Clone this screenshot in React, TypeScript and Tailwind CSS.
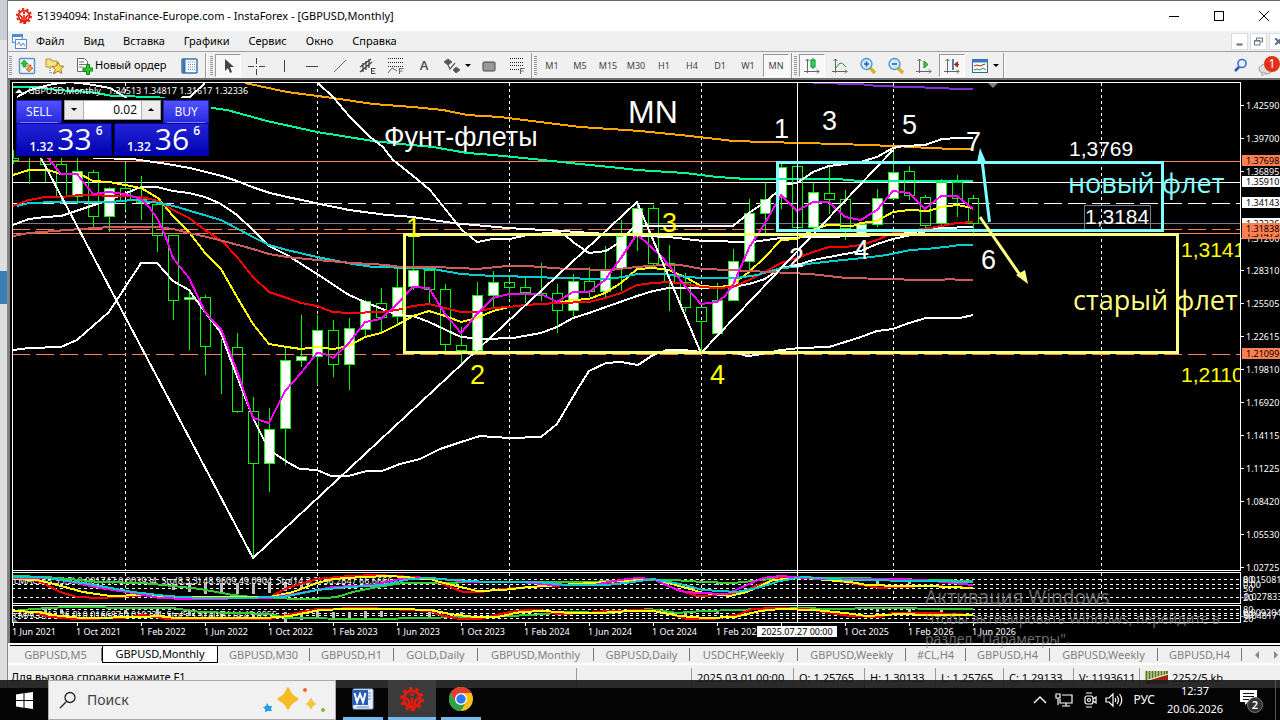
import React from "react";

type Candle = [x: number, high: number, low: number, top: number, bottom: number, up: 0 | 1];

const candles: Candle[] = [
  [13, 150, 164, 158, 160, 0], [29, 150, 184, 150, 156, 0], [45, 150, 182, 155, 164, 0],
  [61, 158, 204, 164, 196, 0], [77, 158, 204, 171, 196, 1], [93, 170, 227, 172, 216, 0],
  [109, 187, 232, 188, 216, 1], [125, 163, 210, 188, 200, 0], [141, 176, 220, 199, 202, 0],
  [157, 203, 252, 204, 235, 0], [173, 235, 320, 235, 300, 0], [189, 290, 350, 297, 299, 1],
  [205, 295, 375, 297, 346, 0], [221, 339, 394, 346, 346, 0], [237, 333, 413, 347, 411, 0],
  [253, 397, 557, 411, 463, 0], [269, 408, 492, 429, 463, 1], [285, 348, 465, 360, 428, 1],
  [301, 315, 367, 356, 360, 1], [317, 315, 385, 330, 356, 1], [333, 320, 377, 330, 364, 0],
  [349, 318, 390, 328, 364, 1], [365, 300, 337, 301, 329, 1], [381, 288, 333, 303, 317, 0],
  [397, 268, 325, 287, 316, 1], [413, 218, 290, 270, 286, 1], [429, 270, 305, 270, 289, 0],
  [445, 284, 353, 289, 344, 0], [461, 327, 363, 345, 350, 0], [477, 282, 355, 295, 350, 1],
  [493, 271, 307, 282, 295, 1], [509, 278, 298, 282, 287, 0], [525, 278, 303, 287, 292, 0],
  [541, 263, 301, 293, 295, 0], [557, 284, 333, 293, 310, 0], [573, 274, 316, 281, 310, 1],
  [589, 267, 297, 281, 291, 0], [605, 246, 297, 269, 291, 1], [621, 220, 291, 236, 268, 1],
  [637, 204, 251, 208, 235, 1], [653, 205, 268, 208, 263, 0], [669, 245, 311, 263, 282, 0],
  [685, 273, 312, 282, 307, 0], [701, 307, 351, 307, 321, 0], [717, 283, 337, 300, 333, 1],
  [733, 249, 300, 261, 300, 1], [749, 199, 270, 213, 261, 1], [765, 183, 233, 199, 213, 1],
  [781, 162, 209, 167, 197, 1], [797, 166, 227, 166, 227, 0], [813, 183, 232, 192, 227, 1],
  [829, 167, 214, 193, 199, 0], [845, 190, 240, 199, 228, 0], [861, 222, 233, 224, 233, 1],
  [877, 189, 227, 198, 224, 1], [893, 152, 198, 172, 198, 1], [909, 166, 200, 171, 195, 0],
  [925, 195, 228, 197, 225, 0], [941, 179, 226, 182, 223, 1], [957, 175, 217, 182, 198, 0],
  [973, 195, 233, 198, 223, 0],
];

const curves: { color: string; points: string }[] = [
  { color: "#8a2be2", points: "813,83 860,84 877,86 908,87 941,88 957,89 973,89" },
  { color: "#ffa500", points: "245,83 287,92 333,98 373,104 413,107 443,110 467,115 500,117 540,122 580,127 640,131 680,135 717,139 733,141 767,142 800,143 840,144 893,146 915,147 927,148 957,149 973,149" },
  { color: "#00fa9a", points: "13,87 37,87 57,90 90,92 113,96 157,97 190,103 212,108 227,110 267,121 317,132 373,141 400,144 433,147 467,153 493,155 533,159 580,164 620,168 637,170 669,172 685,173 717,177 747,179 767,179 837,179 860,181 973,181" },
  { color: "#ffffff", points: "17,97 30,90 53,84 70,82 87,84 110,88 125,97 140,110 165,112 183,97 190,97 205,83" },
  { color: "#ffffff", points: "318,83 333,97 350,117 370,137 383,147 393,160 412,175 430,190 446,210 462,230 477,242 493,239 510,239 527,235 557,232 565,235 573,242 589,253 606,251 617,244 633,228 642,226 733,226 749,213 765,202 777,192 781,185 797,183 813,172 829,166 860,162 877,157 893,148 903,146 925,145 942,139 958,138 973,138" },
  { color: "#ffffff", points: "93,158 133,159 167,164 190,168 222,176 237,181 252,187 270,193 287,197 302,200 320,204 349,210 387,215 413,217 453,223 507,228 563,231 620,235 669,237 703,241 753,242 780,238 820,237 861,236 900,234 941,228 973,227" },
  { color: "#ffffff", points: "13,225 29,219 45,217 61,216 70,213 109,200 141,187 157,187 173,191 189,193 205,197 221,204 237,215 253,230 269,246 287,255 317,274 349,295 365,302 397,315 413,316 429,322 461,337 483,339 513,338 541,333 557,327 573,318 589,313 620,302 637,296 653,291 669,288 717,288 733,287 749,284 765,279 781,268 797,265 813,260 829,257 861,251 877,244 893,239 925,232" },
  { color: "#ffffff", points: "13,350 29,348 61,347 77,340 109,312 141,263 157,263 173,281 189,290 205,312 221,333 230,358 253,418 264,440 274,453 287,462 300,469 317,470 331,476 348,476 367,471 382,471 400,464 420,459 440,449 461,442 480,436 509,438 541,437 557,424 577,390 589,371 606,363 621,362 638,365 653,355 667,350 683,350 701,352 733,352 747,356 757,355 781,350 800,348 829,347 845,342 861,337 877,331 893,329 909,323 926,318 960,318 973,315" },
  { color: "#ffff00", points: "13,175 29,170 48,170 61,174 80,174 93,181 109,182 125,185 141,188 158,198 173,216 189,232 205,253 221,269 237,297 253,324 269,344 287,347 301,349 317,347 333,349 349,346 365,337 381,333 397,325 413,316 429,311 445,316 461,322 477,318 493,311 509,307 525,305 557,303 573,300 589,299 605,293 621,283 637,269 653,268 669,270 687,278 701,286 717,287 730,286 749,272 765,257 781,240 797,239 813,230 827,225 853,226 861,223 877,221 893,212 909,210 928,211 941,207 957,205 973,208" },
  { color: "#ff0000", points: "13,206 29,200 45,197 61,197 80,195 123,196 141,197 158,201 173,210 189,218 205,230 223,242 237,257 253,277 269,292 287,298 301,303 317,306 333,312 349,313 381,312 397,310 413,306 429,304 445,308 461,312 477,312 493,308 509,307 525,305 557,303 589,302 605,298 621,293 637,285 653,283 669,282 687,284 701,287 717,288 733,287 749,280 765,272 781,263 797,258 813,252 829,247 845,247 861,245 877,240 893,233 930,228 941,226 957,223 973,222" },
  { color: "#00ced1", points: "17,206 29,203 57,202 110,202 133,200 160,203 177,207 221,220 253,237 269,245 287,250 317,257 337,261 353,264 373,267 413,268 433,269 461,274 493,276 541,277 553,278 607,279 623,277 637,274 663,274 687,277 703,278 737,278 757,275 781,268 797,267 807,264 833,261 863,258 887,255 910,250 927,249 945,247 960,245 973,245" },
  { color: "#cd5c5c", points: "13,236 29,233 67,230 110,227 158,227 173,229 189,233 207,237 227,242 253,249 269,254 287,257 317,260 353,263 387,265 400,267 430,267 461,268 477,269 507,266 527,266 567,269 610,270 637,267 663,265 680,265 703,269 730,270 770,272 810,274 847,278 887,279 920,280 940,280 950,279 960,280 973,280" },
  { color: "#ff00ff", points: "48,158 61,174 77,174 93,194 109,192 125,194 141,199 149,207 157,218 165,235 173,258 189,278 205,312 213,321 221,329 237,371 253,418 269,423 285,391 301,373 317,353 325,354 333,358 349,343 365,322 381,319 397,304 413,287 429,288 445,314 461,333 477,314 493,298 509,294 541,294 557,302 573,292 589,292 605,280 621,258 637,234 663,258 685,286 701,304 717,302 725,296 733,285 749,248 765,223 781,195 797,211 813,202 829,202 845,217 861,220 877,210 893,191 909,193 925,209 941,196 957,196 973,209" },
  { color: "#ffffff", points: "41,158 253,558 477,350 637,202 701,353 893,150" },
];

const oscillators: { color: string; points: string }[] = [
  { color: "#32cd32", points: "13,576 47,577 100,582 143,583 173,586 200,589 233,595 260,598 313,599 337,597 353,592 377,587 403,583 430,583 487,582 587,582 637,580 673,580 703,582 733,583 753,581 780,578 850,578 973,581" },
  { color: "#ff0000", points: "13,578 30,579 43,583 60,592 77,597 100,598 150,595 180,598 270,597 287,588 317,579 350,576 377,575 430,578 440,583 463,592 480,592 503,589 530,587 570,585 593,584 653,579 673,588 697,596 720,595 740,593 753,587 780,578 810,577 850,583 880,588 897,587 933,586 973,588" },
  { color: "#ffff00", points: "13,579 37,580 50,583 83,592 110,596 143,595 167,597 270,597 293,592 317,583 333,579 363,577 390,576 430,579 440,582 477,591 503,590 530,587 560,585 607,582 653,579 687,588 703,593 730,596 747,592 773,580 803,578 850,582 867,585 900,586 927,586 973,588" },
  { color: "#ff00ff", points: "13,578 50,578 67,581 100,588 133,593 160,598 187,599 270,598 300,593 333,587 373,585 400,579 430,578 470,582 520,582 553,585 593,585 620,580 637,578 653,579 680,591 697,593 727,594 747,585 763,578 780,576 820,579 893,579 923,580 943,582 973,585" },
  { color: "#00ced1", points: "13,577 40,577 83,583 133,592 167,596 200,598 233,598 283,597 317,590 350,587 383,585 410,579 430,578 453,580 487,582 537,582 567,585 607,585 633,582 653,579 680,584 703,590 737,592 757,588 780,581 803,577 850,580 927,581 973,582" },
  { color: "#32cd32", points: "13,611 33,609 67,607 143,608 173,608 200,612 270,614 287,618 367,619 430,618 453,617 487,617 530,615 570,612 607,613 650,609 677,613 703,611 737,610 780,608 850,609 860,608 973,609" },
  { color: "#ff0000", points: "13,611 33,612 50,617 77,619 123,618 143,615 167,619 270,619 287,615 317,609 367,608 430,611 440,615 460,619 480,619 500,614 523,610 540,610 557,614 587,613 607,611 650,610 673,615 687,619 713,619 737,615 753,609 773,608 807,609 830,613 850,616 880,617 893,613 933,613 973,615" },
  { color: "#ffff00", points: "13,611 37,612 60,616 83,618 143,617 158,616 175,618 265,618 290,616 320,610 347,609 400,609 430,610 450,614 475,617 498,617 520,612 545,611 570,613 600,613 630,611 653,611 680,616 705,618 735,617 760,611 780,609 815,610 845,613 867,616 900,614 930,615 973,615" },
];

const histogram: [number, number, number][] = [
  [173, 584, 590], [189, 583, 592], [205, 583, 594], [221, 583, 594], [237, 583, 594], [253, 583, 594],
  [269, 583, 593], [285, 582, 591], [301, 582, 588], [669, 580, 582], [701, 580, 583], [717, 582, 585],
  [781, 576, 580], [813, 577, 580], [877, 580, 584], [909, 580, 584], [45, 609, 613], [61, 609, 614],
  [125, 610, 614], [157, 610, 617], [189, 610, 616], [221, 611, 618], [253, 612, 620], [285, 612, 622],
  [301, 612, 620], [317, 611, 619], [333, 612, 619], [349, 612, 618], [365, 611, 618], [381, 611, 617],
  [429, 612, 617], [461, 612, 617], [509, 611, 615], [685, 611, 615], [717, 611, 614], [877, 609, 612],
  [909, 609, 613], [941, 609, 612],
];

const prices: [string, number][] = [
  ["1.42590", 105], ["1.39700", 138], ["1.36895", 171], ["1.31200", 238], ["1.28310", 270], ["1.25505", 303],
  ["1.22615", 336], ["1.19810", 369], ["1.16920", 402], ["1.14115", 435], ["1.11225", 468], ["1.08420", 501],
  ["1.05530", 534], ["1.02725", 567],
];

const priceTags: [string, number, string][] = [
  ["1.37698", 160, "#ff7f50"], ["1.35910", 181, "#ffffff"], ["1.34143", 202, "#ffffff"],
  ["1.32336", 223, "#ffffff"], ["1.31473", 233, "#ff7f50"], ["1.31838", 228, "#ff7f50"],
  ["1.21099", 353, "#ff7f50"],
];

const dates = [
  "1 Jun 2021", "1 Oct 2021", "1 Feb 2022", "1 Jun 2022", "1 Oct 2022", "1 Feb 2023", "1 Jun 2023", "1 Oct 2023",
  "1 Feb 2024", "1 Jun 2024", "1 Oct 2024", "1 Feb 2025", "", "1 Oct 2025", "1 Feb 2026", "1 Jun 2026",
];

const notes: [string, number, number, string, string][] = [
  ["MN", 628, 123, "#fff", "text-[32px]"],
  ["Фунт-флеты", 384, 146, "#fff", "text-[27px]"],
  ["1", 774, 138, "#fff", "text-[27px]"],
  ["3", 822, 130, "#fff", "text-[27px]"],
  ["5", 902, 134, "#fff", "text-[27px]"],
  ["7", 966, 151, "#fff", "text-[27px]"],
  ["2", 789, 267, "#fff", "text-[27px]"],
  ["4", 854, 259, "#fff", "text-[27px]"],
  ["6", 981, 269, "#fff", "text-[27px]"],
  ["1", 406, 237, "#ff0", "text-[27px]"],
  ["3", 662, 232, "#ff0", "text-[27px]"],
  ["2", 470, 384, "#ff0", "text-[27px]"],
  ["4", 710, 384, "#ff0", "text-[27px]"],
  ["1,3769", 1069, 156, "#fff", "text-[21px]"],
  ["1,3184", 1085, 224, "#fff", "text-[21px]"],
  ["1,3141", 1181, 257, "#ff0", "text-[21px]"],
  ["1,2110", 1181, 382, "#ff0", "text-[21px]"],
];

function Chart() {
  return (
    <svg viewBox="10 80 1270 563" preserveAspectRatio="xMinYMin meet" className="block h-full w-full" role="img" aria-label="GBPUSD, Monthly">
      <defs>
        <clipPath id="plot"><rect x="12" y="83" width="1228" height="560" /></clipPath>
      </defs>
      <rect x="10" y="80" width="1270" height="563" fill="#000" />
      <g shapeRendering="crispEdges" fill="none" clipPath="url(#plot)">
        {[125, 317, 509, 701, 893, 1101].map((x) => (
          <path key={x} d={`M${x + 0.5} 83V570M${x + 0.5} 573V603`} stroke="#fff" strokeDasharray="3 3" />
        ))}
        <path d="M12 161.5H1240M12 233.5H1240" stroke="#ff7f50" />
        <path d="M12 182.5H1240" stroke="#fff" />
        <path d="M12 203.5H1240" stroke="#fff" strokeDasharray="18 6" />
        <path d="M12 223.5H1240" stroke="#708090" />
        <path d="M12 229.5H1240M12 354.5H1240" stroke="#ff7f50" strokeDasharray="18 6" />
        {candles.map(([x, h, l, t, b, up]) => (
          <g key={x}>
            <path d={`M${x + 0.5} ${h}V${t}M${x + 0.5} ${b}V${l}`} stroke="#0f0" />
            <rect x={x - 4.5} y={t + 0.5} width="10" height={b - t} fill={up ? "#fff" : "none"} stroke="#0f0" />
          </g>
        ))}
        {curves.map((c, i) => (
          <polyline key={i} points={c.points} stroke={c.color} strokeWidth="2" />
        ))}
        <path d="M797.5 83V622" stroke="#fff" />
        <rect x="404.5" y="234.5" width="773" height="118" stroke="#ffff80" strokeWidth="3" />
        <rect x="777.5" y="162.5" width="385" height="68" stroke="#80ffff" strokeWidth="3" />
        <path d="M1084.5 229V205.5H1150.5V229" stroke="#708090" />
        <path
          d="M12 579.5H1240M12 584.5H1240M12 588.5H1240M12 597.5H1240M12 609.5H1240M12 613.5H1240M12 615.5H1240M12 618.5H1240"
          stroke="#fff"
          strokeDasharray="3 3"
        />
        {histogram.map(([x, t, b]) => (
          <path key={`${x}-${t}`} d={`M${x + 0.5} ${t}V${b}`} stroke="#c0c0c0" strokeWidth="3" />
        ))}
        <g className="fill-white font-['Noto_Sans',sans-serif] text-[9px]">
          <text x="14" y="584" xmlSpace="preserve">cMACD(5,35,5) 0.001747 0.003934  Sto(8,3,3) 48.9609 49.0904  Sto(14,3,3) 56.2847 66.6666</text>
          <text x="14" y="618" xmlSpace="preserve">cMACD(12,26,9) 0.016687 0.019234  Sto(5,3,3) 40.6114 43.0955</text>
        </g>
        {oscillators.map((c, i) => (
          <polyline key={i} points={c.points} stroke={c.color} strokeWidth="2" />
        ))}
      </g>
      <g stroke="none">
        <path d="M980 148L986 162H977z" fill="#80ffff" />
        <path d="M989.5 222L982 160" stroke="#80ffff" strokeWidth="3" />
        <path d="M1028 284L1016 275L1025 270z" fill="#ffff80" />
        <path d="M980 217L1020 275" stroke="#ffff80" strokeWidth="3" />
        <path d="M988 83h10l-5 5z" fill="#708090" />
        <path d="M15 93l4-4l4 4z" fill="#fff" />
        <path d="M13 617l5 5h-5z" fill="#708090" />
      </g>
      <g clipPath="url(#plot)">
        {notes.map(([t, x, y, fill, size], i) => (
          <text key={i} x={x} y={y} fill={fill} className={`font-['Liberation_Sans',sans-serif] ${size}`}>{t}</text>
        ))}
        <text x="1068" y="193" fill="#80ffff" className="font-['Open_Sans',sans-serif] text-[27px]">новый флет</text>
        <text x="1073" y="310" fill="#ffff80" className="font-['Open_Sans',sans-serif] text-[27px]">старый флет</text>
      </g>
      <g shapeRendering="crispEdges" stroke="#fff" fill="none">
        <path d="M12.5 622V82.5H1240.5V570.5H12M12 572.5H1240.5V603.5H12M12 605.5H1240.5V622.5H12" />
        {prices.map(([p, y]) => <path key={p} d={`M1241 ${y + 0.5}h3`} />)}
        {dates.map((_, i) => <path key={i} d={`M${13.5 + i * 64} 622v4`} />)}
      </g>
      <g className="font-['Noto_Sans',sans-serif] text-[9px]">
        {prices.map(([p, y]) => <text key={p} x="1246" y={y + 4} fill="#fff">{p}</text>)}
        {priceTags.map(([p, y, c]) => (
          <g key={p}>
            <rect x="1242" y={y - 5} width="38" height="11" fill={c} />
            <text x="1246" y={y + 4} fill="#000">{p}</text>
          </g>
        ))}
        <g fill="#fff">
          <text x="28" y="94" xmlSpace="preserve">GBPUSD,Monthly   1.34513 1.34817 1.31617 1.32336</text>
          {dates.map((d, i) => <text key={i} x={12 + i * 64} y="635">{d}</text>)}
          <text x="1243" y="583">80</text>
          <text x="1243" y="583">0.015081</text>
          <text x="1243" y="588">0.00</text>
          <text x="1243" y="592">50</text>
          <text x="1243" y="601">20</text>
          <text x="1241" y="600">-0.027833</text>
          <text x="1243" y="613">80</text>
          <text x="1243" y="616">0.009204</text>
          <text x="1243" y="618">50</text>
          <text x="1243" y="622">20</text>
          <text x="1241" y="619">-0.04817</text>
        </g>
        <rect x="757" y="626" width="80" height="11" fill="#fff" />
        <text x="797" y="635" textAnchor="middle" fill="#000">2025.07.27 00:00</text>
      </g>
    </svg>
  );
}

function QuoteButton({ side, pips }: { side: string; pips: string }) {
  return (
    <button aria-label={`${side} 1.32${pips}6`} className="flex h-[33px] flex-1 items-end justify-end border border-[#0000a0] bg-gradient-to-b from-[#2222d8] to-[#0000b0] pr-2 text-white">
      <span className="text-xs font-semibold leading-4">1.32</span>
      <span className="px-1 text-[30px] leading-[32px]">{pips}</span>
      <span className="self-start pt-px text-xs font-semibold leading-3">6</span>
    </button>
  );
}

function TradePanel() {
  return (
    <div className="absolute left-1 top-[18px] flex w-[197px] flex-col bg-black p-0.5 font-['Open_Sans',sans-serif]">
      <div className="flex h-[23px] items-start gap-0.5">
        <button className="h-full w-[46px] border border-b-0 border-[#2020b0] bg-gradient-to-b from-[#5252ff] to-[#2626dc] px-[3px] text-xs leading-5 text-white">
          <span className="block border-b border-[#8080ff]">SELL</span>
        </button>
        <div className="flex h-5 flex-1 border border-[#a0a0a0] bg-white">
          <button aria-label="Меньше" className="flex w-[19px] items-center justify-center border-r border-[#b0b0b0] bg-[#ececec]">
            <svg width="6" height="4"><path d="M0 0h6l-3 3z" /></svg>
          </button>
          <input aria-label="Объём" defaultValue="0.02" className="w-0 min-w-0 flex-1 pr-1 text-right text-xs leading-4 text-black outline-none" />
          <button aria-label="Больше" className="flex w-[19px] items-center justify-center border-l border-[#b0b0b0] bg-[#ececec]">
            <svg width="6" height="4"><path d="M0 3h6l-3-3z" /></svg>
          </button>
        </div>
        <button className="h-full w-[46px] border border-b-0 border-[#2020b0] bg-gradient-to-b from-[#5252ff] to-[#2626dc] px-[3px] text-xs leading-5 text-white">
          <span className="block border-b border-[#8080ff]">BUY</span>
        </button>
      </div>
      <div className="flex gap-0.5">
        <QuoteButton side="SELL" pips="33" />
        <QuoteButton side="BUY" pips="36" />
      </div>
    </div>
  );
}

function Gear({ size }: { size: number }) {
  return (
    <svg width={size} height={size} viewBox="0 0 24 24" fill="none" stroke="#e81c0c">
      <circle cx="12" cy="12" r="8.2" strokeWidth="2.6" />
      <circle cx="12" cy="12" r="10.6" strokeWidth="2.8" strokeDasharray="3.3 3.36" />
      <path d="M12 10.5V24M9 21v-7L5.5 10.5M15 21v-7l3.5-3.500" strokeWidth="2.4" />
      <circle cx="12" cy="7.5" r="1.8" fill="#e81c0c" stroke="none" />
    </svg>
  );
}

const S = ({ children }: { children: React.ReactNode }) => (
  <svg width="18" height="18" viewBox="0 0 18 18" fill="none" stroke="#666" strokeWidth="1">{children}</svg>
);

const axes = <path d="M4.5 2v14M1 14.5h15M2.500 4l2-2l2 2M14 12.500l2 2l-2 2" stroke="#666" />;

function Tool({ label, pressed, wide, children }: { label: string; pressed?: boolean; wide?: boolean; children: React.ReactNode }) {
  return (
    <button
      aria-label={label}
      className={`mx-px flex h-[23px] items-center justify-center gap-1 text-[9px] text-[#444] ${wide ? "w-[35px]" : "w-[26px]"} ${pressed ? "border border-b-white border-l-[#999] border-r-white border-t-[#999] bg-[#f8f8f8]" : ""}`}
    >
      {children}
    </button>
  );
}

const Handle = () => <span className="mx-px h-5 w-[3px] bg-[repeating-linear-gradient(#999_0_1px,#f0f0f0_1px_2px)]" />;
const Rule = () => <span className="h-full w-0.5 border-l border-[#999] bg-white" />;
const Caret = () => <svg width="6" height="4"><path d="M0 0h6L3 3z" fill="#000" /></svg>;

const drawTools: { label: string; wide?: boolean; pressed?: boolean; icon: React.ReactNode }[] = [
  { label: "Курсор", pressed: true, icon: <S><path d="M6 2v12l3-3l2 5l2-1l-2-5h4z" fill="#444" stroke="none" /></S> },
  { label: "Перекрестие", icon: <S><path d="M9.5 1v6M9.5 12v6M1 9.5h6M12 9.5h6M9 9.5h1" stroke="#444" /></S> },
  { label: "Вертикальная линия", icon: <S><path d="M9.5 3v12" stroke="#444" /></S> },
  { label: "Горизонтальная линия", icon: <S><path d="M3 9.5h12" stroke="#444" /></S> },
  { label: "Трендовая линия", icon: <S><path d="M3 15L15 3" /></S> },
  { label: "Канал", icon: <S><path d="M1 10L12 2M1 15L13 5M4 6v9M7 4v9M10 2v9M3 13l3-2" stroke="#444" strokeWidth="1.3" /><path d="M12.5 11v6M12.5 11.5h4M12.5 14h3M12.5 16.5h4" stroke="#444" /></S> },
  { label: "Фибоначчи", icon: <S><path d="M1 1.5h16M1 5.5h16M1 9.5h16" strokeDasharray="1 1" stroke="#222" /><path d="M1 16l4-5l5 3M12.5 11v6M12.5 11.5h4M12.5 14h3" /></S> },
  { label: "Текст", icon: <span className="text-[13px] font-semibold text-[#555]">A</span> },
  { label: "Стрелки", wide: true, icon: <><S><path d="M1 5l4-3l4 3l-4 3zM10 13l3-3l4 3l-4 3z" fill="#555" /><path d="M5 8l2 4l5-6" strokeWidth="1.4" /></S><Caret /></> },
  { label: "Прямоугольник", icon: <S><rect x="3" y="5" width="12" height="9" rx="1" fill="#999" stroke="#444" /></S> },
  { label: "Уровни", icon: <S><path d="M2 1.5h14M2 5.5h14M2 8.5h14M2 12.5h9" strokeDasharray="1 1" stroke="#222" /><path d="M12.5 11v6M12.5 11.5h4M12.5 14h3" /></S> },
];

const Lens = ({ minus }: { minus?: boolean }) => (
  <S>
    <path d="M11 11l5 5" stroke="#e0b020" strokeWidth="3.5" />
    <circle cx="7.5" cy="7" r="5.5" fill="#cfe9fb" stroke="#4a90cc" strokeWidth="1.3" />
    <path d={minus ? "M5 7h5" : "M5 7h5M7.5 4.5v5"} stroke="#2565a8" strokeWidth="1.6" />
  </S>
);

const chartTools: { label: string; wide?: boolean; pressed?: boolean; icon: React.ReactNode }[] = [
  { label: "Свечи", pressed: true, icon: <S>{axes}<path d="M10 1v11" stroke="#084" /><rect x="8" y="3" width="4" height="7" fill="#3d4" stroke="#084" /></S> },
  { label: "Линия", icon: <S>{axes}<path d="M5 11l4-5q2-1 6 4" stroke="#292" /></S> },
  { label: "Увеличить", icon: <Lens /> },
  { label: "Уменьшить", icon: <Lens minus /> },
  { label: "Автопрокрутка", icon: <S>{axes}<path d="M9 4v7l4-3.500z" fill="#3c3" stroke="#282" /></S> },
  { label: "Сдвиг графика", pressed: true, icon: <S>{axes}<path d="M10 2v11" stroke="#258" strokeWidth="1.5" /><path d="M16 7.5h-4M14.500 5l-3 2.500l3 2.500z" fill="#a21" stroke="#a21" /></S> },
  { label: "Шаблоны", wide: true, icon: <><S><rect x="1.5" y="2.5" width="15" height="13" fill="#fff" stroke="#2b66a8" /><path d="M1 4h16" stroke="#3a7ac0" strokeWidth="3" /><path d="M3 9l3-1l3 1l5-2" stroke="#a21" /><path d="M3 13l3-1l3 1l3-2l3 2" stroke="#292" /></S><Caret /></> },
];

const menu = ["Файл", "Вид", "Вставка", "Графики", "Сервис", "Окно", "Справка"];
const frames = ["M1", "M5", "M15", "M30", "H1", "H4", "D1", "W1", "MN"];

const tabs: [string, string][] = [
  ["GBPUSD,M5", "w-[92px]"], ["GBPUSD,Monthly", "w-[116px]"], ["GBPUSD,M30", "w-[92px]"], ["GBPUSD,H1", "w-[84px]"],
  ["GOLD,Daily", "w-[84px]"], ["GBPUSD,Monthly", "w-[116px]"], ["GBPUSD,Daily", "w-[96px]"], ["USDCHF,Weekly", "w-[108px]"],
  ["GBPUSD,Weekly", "w-[108px]"], ["#CL,H4", "w-[60px]"], ["GBPUSD,H4", "w-[84px]"], ["GBPUSD,Weekly", "w-[108px]"], ["GBPUSD,H4", "w-[84px]"],
];

const status: [string, string][] = [
  ["", "w-[115px]"], ["2025.03.01 00:00", "w-[102px]"], ["O: 1.25765", "w-[71px]"], ["H: 1.30133", "w-[71px]"],
  ["L: 1.25765", "w-[68px]"], ["C: 1.29133", "w-[70px]"], ["V: 1193611", "w-[66px]"],
];

function Toolbar() {
  return (
    <div className="flex h-7 shrink-0 items-center border-b-2 border-[#707070] bg-[#f0f0f0] pt-px">
      <Handle />
      <button aria-label="Обзор рынка" className="flex w-7 justify-center">
        <svg width="18" height="18" viewBox="0 0 18 18"><rect x="1.5" y="1.5" width="15" height="15" rx="1" fill="#eef6fd" stroke="#5a96c8" strokeWidth="1.5" /><path d="M3 7l3-4l4 4H8v3H5V7z" fill="#2c2" stroke="#171" strokeWidth=".6" /><path d="M8 12l3 3l4-4h-2V8h-3v3z" fill="#f94" stroke="#a41" strokeWidth=".6" /></svg>
      </button>
      <button aria-label="Навигатор" className="flex w-7 justify-center">
        <svg width="20" height="18" viewBox="0 0 20 18"><path d="M1 2h5l1 2h5v6H1z" fill="#fbe58a" stroke="#b98b2a" /><path d="M5 11v5h5" fill="none" stroke="#666" strokeDasharray="1 1" /><path d="M13 5l1.8 4l4.2.3l-3.200 2.9l1 4.3L13 14.2L9.2 16.5l1-4.300L7 9.3l4.2-.3z" fill="#ffd75a" stroke="#a8801c" /></svg>
      </button>
      <button className="flex w-[104px] items-center gap-0.5 pl-1.5 text-left text-[11px] text-black">
        <svg width="18" height="18" viewBox="0 0 18 18" className="shrink-0"><path d="M2.5 1.5h7l3 3v10h-10z" fill="#fff" stroke="#666" /><path d="M4 5h5M4 7.5h7M4 10h4" stroke="#777" /><path d="M8 11h3.500V7.5h3V11H18v3h-3.500v3.500h-3V14H8z" fill="#2bcc2b" stroke="#128012" /></svg>
        <span className="whitespace-nowrap">Новый ордер</span>
      </button>
      <button aria-label="Терминал" className="flex w-8 justify-center">
        <svg width="17" height="16" viewBox="0 0 17 16"><rect x="1" y="1" width="15" height="14" rx="1" fill="#f4faff" stroke="#3875ad" strokeWidth="1.5" /><path d="M3 1v14" stroke="#3875ad" strokeWidth="3" /><path d="M7 4h8M7 6.5h8M7 9h8M7 11.5h8" stroke="#889" strokeDasharray="1 1" /></svg>
      </button>
      <Rule />
      <span className="w-0.5" />
      <Handle />
      {drawTools.map((t) => <Tool key={t.label} label={t.label} wide={t.wide} pressed={t.pressed}>{t.icon}</Tool>)}
      <Rule />
      <Handle />
      {frames.map((f) => <Tool key={f} label={f} pressed={f === "MN"}>{f}</Tool>)}
      <span className="w-px" />
      <Rule />
      <Handle />
      {chartTools.map((t) => <Tool key={t.label} label={t.label} wide={t.wide} pressed={t.pressed}>{t.icon}</Tool>)}
      <Rule />
      <div className="ml-auto flex items-center gap-2.5">
        <button aria-label="Поиск">
          <svg width="15" height="15" viewBox="0 0 15 15" fill="none"><path d="M2 13l4-4" stroke="#2a55b8" strokeWidth="2.5" /><circle cx="9" cy="5.5" r="4" fill="#eaf3ff" stroke="#3a6ad0" strokeWidth="1.6" /></svg>
        </button>
        <button aria-label="Уведомления" className="flex">
          <svg width="22" height="22" viewBox="0 0 22 22"><ellipse cx="8" cy="14" rx="7" ry="5" fill="#ddd" stroke="#999" /><path d="M4 17v4l4-3z" fill="#ddd" stroke="#999" strokeWidth=".6" /><circle cx="14" cy="9" r="8" fill="#e0301c" /><text x="14" y="13" textAnchor="middle" fill="#fff" className="text-[12px]">1</text></svg>
        </button>
      </div>
    </div>
  );
}

function Taskbar() {
  return (
    <div className="relative z-10 flex h-10 shrink-0 bg-[linear-gradient(#1c1c1cee_0_8px,#040404_8px)] text-white">
      <button aria-label="Пуск" className="flex w-12 items-center justify-center">
        <svg width="17" height="17" viewBox="0 0 17 17" fill="#fff"><path d="M0 2.5L7.5 1.3V8H0zM8.5 1.2L17 0v8H8.500zM0 9h7.500v6.700L0 14.5zM8.500 9H17v8l-8.500-1.200z" /></svg>
      </button>
      <label className="flex w-72 items-center border border-[#aaa] bg-[#f1f1f1] pl-2.5 pr-2">
        <svg width="18" height="18" viewBox="0 0 18 18" fill="none" stroke="#222" strokeWidth="1.3" className="shrink-0"><circle cx="11" cy="6.5" r="5" /><path d="M7.5 10.500L1 17" /></svg>
        <input aria-label="Поиск" placeholder="Поиск" className="ml-2.5 w-0 flex-1 bg-transparent text-sm text-[#333] outline-none placeholder:text-[#444]" />
        <svg width="64" height="28" viewBox="0 0 64 28" className="shrink-0">
          <path d="M25 3q2 7 9 10q-7 3-9 9q-2-6-9-9q7-3 9-10z" fill="#f7bd28" stroke="#f7bd28" strokeWidth="3" strokeLinejoin="round" />
          <path d="M48 12q1 4 5 6q-4 1-5 5q-1-4-5-5q4-2 5-6z" fill="#f9c440" stroke="#f9c440" strokeLinejoin="round" />
          <path d="M4 17l2 3l3 0l-1 3l1 2l-4 0l-3 1l0-3l-2-2l3-1z" fill="#1fa0e8" />
          <circle cx="42" cy="4" r="2" fill="#ee6530" /><circle cx="60" cy="24" r="2" fill="#83b840" />
        </svg>
      </label>
      <button aria-label="Word" className="ml-[7px] flex w-10 items-center justify-center border-b-[3px] border-[#76b9ed]">
        <svg width="22" height="22" viewBox="0 0 22 22"><rect x="1" y="1" width="20" height="20" rx="1" fill="#e4effb" stroke="#9ab9dd" /><path d="M16 5h3M16 8h3M16 11h3M5 19h12" stroke="#5b8fce" /><rect x="0" y="2" width="16" height="15" fill="#2a5db0" /><path d="M2.5 5l2.500 9l3-8l3 8l2.500-9" fill="none" stroke="#fff" strokeWidth="2" /></svg>
      </button>
      <button aria-label="InstaForex" className="ml-[5px] flex w-12 items-center justify-center border-b-[3px] border-[#76b9ed] bg-[#3b3b3b]"><Gear size={24} /></button>
      <button aria-label="Chrome" className="ml-[5px] flex w-10 items-center justify-center border-b-[3px] border-[#76b9ed]">
        <svg width="24" height="24" viewBox="0 0 24 24"><circle cx="12" cy="12" r="12" fill="#fbc116" /><path d="M12 6h10.400A12 12 0 0 0 1.600 6L6.800 15z" fill="#e33b2e" /><path d="M1.600 6A12 12 0 0 0 12 24l5.200-9L12 12L6.800 15z" fill="#2da14c" /><circle cx="12" cy="12" r="6" fill="#fff" /><circle cx="12" cy="12" r="4.7" fill="#2f78ee" /></svg>
      </button>
      <div className="ml-auto flex items-center text-xs">
        <svg width="14" height="8" viewBox="0 0 14 8" fill="none" stroke="#fff" strokeWidth="1.4" className="mr-2"><path d="M1 7l6-6l6 6" /></svg>
        <svg width="18" height="16" viewBox="0 0 18 16" fill="none" stroke="#fff" strokeWidth="1.2" className="mr-2.5"><path d="M7 3h10v8H5V7M1 2h4v4H1zM3 6v7M7 14h8M11 11v3" /></svg>
        <svg width="14" height="16" viewBox="0 0 14 16" fill="none" stroke="#fff" strokeWidth="1.2" className="mr-2"><rect x="2" y="4" width="8" height="8" rx="2" /><circle cx="6" cy="8" r="1.5" /><path d="M10 7l3-2v6l-3-2M3 1h6M3 15h6" /></svg>
        <svg width="18" height="16" viewBox="0 0 18 16" fill="none" stroke="#fff" strokeWidth="1.2" className="mr-2.5"><path d="M1 6h3l4-4v12l-4-4H1zM10 6q1.5 2 0 4M12 4q3 4 0 8M14.5 2q4.5 6 0 12" /></svg>
        <span>РУС</span>
        <div className="ml-3 flex w-14 flex-col items-center text-[11px] leading-[18px]"><span>12:37</span><span>20.06.2026</span></div>
        <svg width="26" height="26" viewBox="0 0 26 26" className="ml-4 mr-2.5"><path d="M1 3h17v12H9l-3 3v-3H1z" fill="#fff" /><path d="M4 6.5h11M4 9.5h11M4 12.5h6" stroke="#111" /><circle cx="16" cy="18" r="7.5" fill="#333" stroke="#777" /><text x="16" y="22" textAnchor="middle" fill="#fff" className="text-[11px] font-semibold">2</text></svg>
        <span className="mr-1 h-10 border-l border-[#555]" />
      </div>
    </div>
  );
}

export default function App() {
  return (
    <div className="flex h-screen flex-col overflow-hidden bg-black font-['Noto_Sans',sans-serif] text-[11px] text-black">
      <div className="-mb-2 flex min-h-0 flex-1">
        <div className="flex w-2 shrink-0 flex-col border-r border-[#888] bg-[#dedede]">
          <div className="h-10 bg-[#ccd0d6]" />
          <div className="h-20 bg-[#e4e5e8]" />
          <div className="mt-[151px] h-[33px] bg-[#3a7fb4]" />
        </div>
        <div className="flex min-w-0 flex-1 flex-col border-t border-[#666] bg-[#f0f0f0]">
          <div className="flex h-[30px] shrink-0 items-center bg-white pl-2">
            <Gear size={16} />
            <h1 className="ml-[5px] whitespace-nowrap text-[11px]">51394094: InstaFinance-Europe.com - InstaForex - [GBPUSD,Monthly]</h1>
            <div className="ml-auto flex items-center gap-[34px] pr-2.5">
              <button aria-label="Свернуть" className="flex"><svg width="11" height="11"><path d="M0 5.5h10" stroke="#000" /></svg></button>
              <button aria-label="Развернуть" className="flex"><svg width="11" height="11"><rect x=".5" y=".5" width="9" height="9" fill="none" stroke="#000" /></svg></button>
              <button aria-label="Закрыть" className="flex"><svg width="11" height="11"><path d="M0 0l10 10M10 0L0 10" stroke="#000" /></svg></button>
            </div>
          </div>
          <div className="flex h-[21px] shrink-0 items-center border-b border-[#a0a0a0] pl-1">
            <svg width="15" height="15" viewBox="0 0 15 15" fill="#fff" stroke="#4b8bd8"><rect x=".5" y=".5" width="10" height="8" /><path d="M1 2h9" strokeWidth="2" /><rect x="3.5" y="5.5" width="11" height="9" /><path d="M5 11l2-3l2 4l2-3l2 3" fill="none" /></svg>
            <div className="flex gap-px">
              {menu.map((m) => <button key={m} className="px-[9px]">{m}</button>)}
            </div>
            <div className="ml-auto flex gap-0.5 text-[#5d7288]">
              <button aria-label="Свернуть график" className="flex h-[17px] w-[17px] items-center justify-center border border-[#ddd] bg-white"><svg width="9" height="9"><path d="M1.5 7.5h6" stroke="currentColor" strokeWidth="2" /></svg></button>
              <button aria-label="Восстановить график" className="flex h-[17px] w-[17px] items-center justify-center border border-[#ddd] bg-white"><svg width="9" height="9" fill="none" stroke="currentColor"><path d="M2.5 3V1h6v4H7M.5 3.5h5.500v4.500H.5zM.5 4h6" /></svg></button>
              <button aria-label="Закрыть график" className="flex h-[17px] w-[11px] items-center justify-end overflow-hidden border border-r-0 border-[#ddd] bg-white"><svg width="5" height="7"><path d="M0 0l7 7M7 0L0 7" stroke="currentColor" strokeWidth="2" /></svg></button>
            </div>
          </div>
          <Toolbar />
          <div className="relative min-h-0 flex-1 border-l-2 border-[#808080] bg-black">
            <Chart />
            <TradePanel />
            <div className="pointer-events-none absolute left-[915px] top-[505px] whitespace-nowrap text-[#8f8f8f]/75">
              <p className="text-[19px] leading-6">Активация Windows</p>
              <p className="text-[14px] leading-5">Чтобы активировать Windows, перейдите в<br />раздел "Параметры".</p>
            </div>
          </div>
          <div className="flex h-[22px] shrink-0 items-start overflow-hidden border-b-2 border-t-2 border-white pl-0.5">
            <nav className="flex h-[18px] flex-1 border-t border-black text-[#808080]">
              {tabs.map(([t, w], i) => (
                <button key={i} className={`${w} shrink-0 whitespace-nowrap ${i === 1 ? "border-x border-b border-black bg-white leading-4 text-black" : "my-0.5 border-r border-[#777] leading-3"}`}>{t}</button>
              ))}
              <span className="ml-auto flex items-center gap-3.5 pr-px"><svg width="5" height="8"><path d="M4 0v8L0 4z" fill="#888" /></svg><svg width="5" height="8"><path d="M0 0v8l4-4z" fill="#888" /></svg></span>
            </nav>
          </div>
          <footer className="flex h-[23px] shrink-0 items-center whitespace-nowrap pl-[3px] pt-0.5">
            <span className="min-w-0 flex-1">Для вызова справки нажмите F1</span>
            {status.map(([s, w], i) => <span key={i} className={`${w} h-5 shrink-0 border-l border-[#999] pl-[5px] leading-5`}>{s}</span>)}
            <span className="flex w-[141px] shrink-0 items-center gap-1 border-l border-[#999] pl-[5px] leading-5">
              <svg width="23" height="13"><path d="M1.5 0v13M4.5 0v13M7.5 0v13M10.5 0v13M13.5 0v13M16.5 0v13M19.5 0v13M22 0v13" stroke="#5a7a10" strokeWidth="2" /><path d="M1 13v-3l22-6v9z" fill="#a3240e" /><path d="M0 10L23 3" stroke="#f0f0f0" /></svg>
              2252/5 kb
            </span>
          </footer>
        </div>
      </div>
      <Taskbar />
    </div>
  );
}
